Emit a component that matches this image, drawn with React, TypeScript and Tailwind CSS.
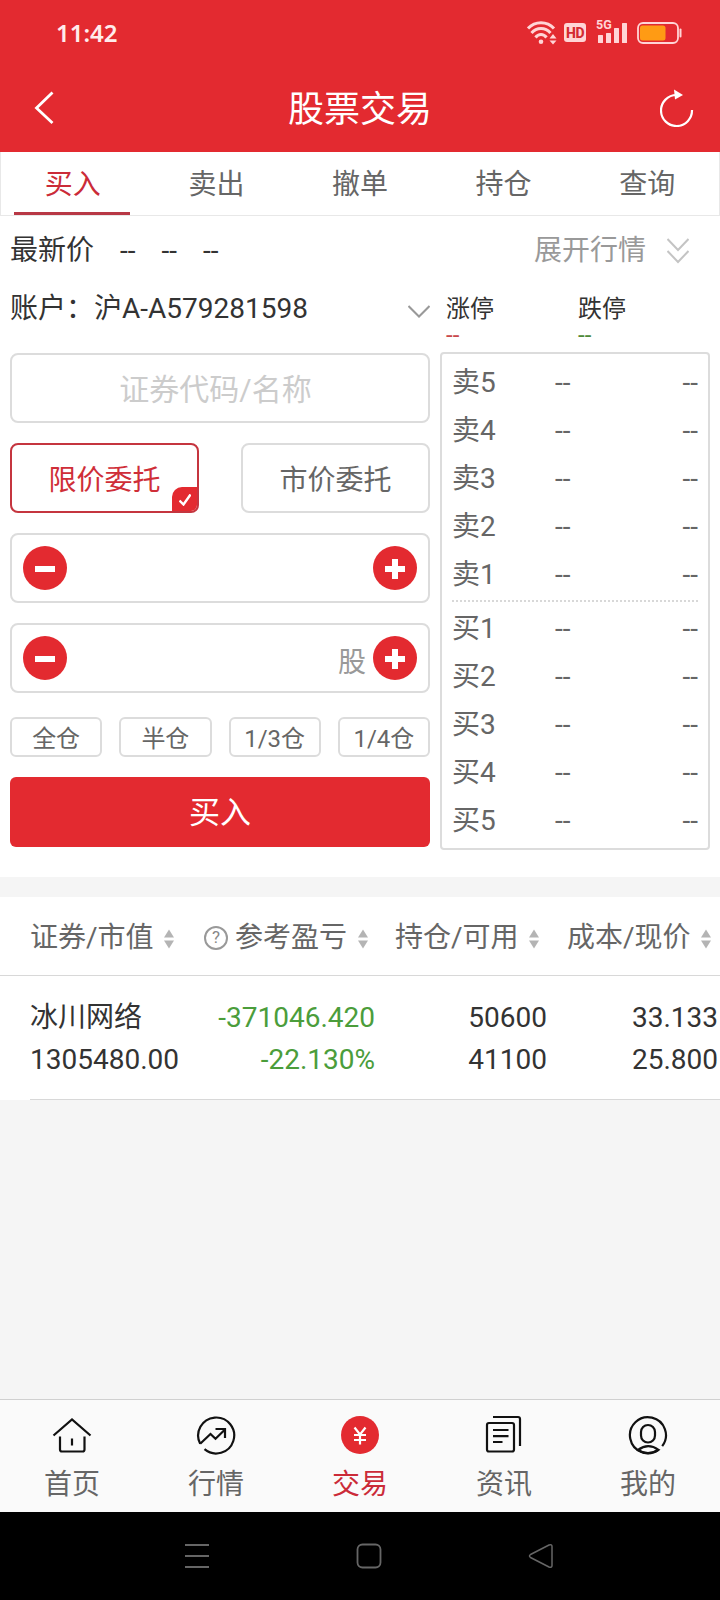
import React, { useState } from 'react';
import clsx from 'clsx';

const tabs = ['买入', '卖出', '撤单', '持仓', '查询'];
const sells = ['卖5', '卖4', '卖3', '卖2', '卖1'];
const buys = ['买1', '买2', '买3', '买4', '买5'];
const portions = ['全仓', '半仓', '1/3仓', '1/4仓'];

const StatusBar = () => (
  <div className="flex h-16 items-center justify-between pl-[56px] pr-[38px] pt-px">
    <span className="font-['Noto_Sans'] text-[24px] font-semibold text-[#ffecec]">11:42</span>
    <div className="flex items-center text-[#ffd5d6]">
      <svg width="30" height="24" viewBox="0 0 30 24" fill="none" stroke="currentColor" strokeWidth="3">
        <path d="M1 7.500C8 -0.200 20 -0.200 27 7.500" />
        <path d="M4.500 12C9.700 6 18.300 6 23.500 12" />
        <path d="M8.500 16.500C11.500 12.500 16.500 12.500 19.500 16.500" />
        <circle cx="14" cy="20.800" r="2.300" fill="currentColor" stroke="none" />
        <path d="M22.500 17.500l3.500-4.500 3.500 4.500zM22.500 19.500l3.500 4 3.500-4z" fill="currentColor" stroke="none" />
      </svg>
      <span className="ml-[7px] flex h-[19px] w-[22px] items-center justify-center rounded-[3px] bg-[#ffd5d6] font-['Roboto'] text-[14px] font-extrabold leading-none tracking-tight text-[#d42a31]">
        HD
      </span>
      <div className="relative ml-[10px] h-6 w-8">
        <span className="absolute left-0 -top-[2px] font-['Roboto'] text-[12.5px] font-bold leading-none">5G</span>
        <svg width="32" height="24" viewBox="0 0 32 24" fill="currentColor">
          <rect x="2" y="14" width="5" height="8" rx="0.500" />
          <rect x="10" y="12" width="5" height="10" rx="0.500" />
          <rect x="18" y="7" width="5" height="15" rx="0.500" />
          <rect x="26" y="2" width="5" height="20" rx="0.500" />
        </svg>
      </div>
      <svg className="ml-[9px]" width="45" height="22" viewBox="0 0 45 22" fill="none">
        <rect x="1" y="1" width="40" height="20" rx="5" stroke="currentColor" strokeWidth="1.800" />
        <rect x="3" y="3.500" width="25.500" height="15" rx="2.500" fill="#ff9b14" />
        <path d="M43.500 7.500v7" stroke="currentColor" strokeWidth="2" strokeLinecap="round" />
      </svg>
    </div>
  </div>
);

const StepButton: React.FC<{ plus?: boolean }> = ({ plus }) => (
  <button className="flex h-11 w-11 items-center justify-center rounded-full bg-[#e32a30]">
    <svg width="20" height="20" viewBox="0 0 20 20" className="mt-[2px]">
      <path d={plus ? 'M0 10h20M10 0v20' : 'M0 10h20'} stroke="#fff" strokeWidth="6" />
    </svg>
  </button>
);

const SortIcon = () => (
  <svg width="10" height="20" viewBox="0 0 10 20" fill="#b4b4b4" className="mt-[3px] shrink-0">
    <path d="M5 0.500l5 8H0zM5 19.500l5-8H0z" />
  </svg>
);

const QuoteRow: React.FC<{ label: string }> = ({ label }) => (
  <div className="flex h-12 items-center pt-px">
    <span className="w-[103px]">{label}</span>
    <span className="flex-1">--</span>
    <span>--</span>
  </div>
);

const navItems = [
  {
    label: '首页',
    icon: (
      <>
        <path d="M1.500 20.500L20 4.500l18.500 16" />
        <path d="M8 21.500v13q0 2 2 2h20.500q2 0 2-2v-13M20 23.500v7" />
      </>
    ),
  },
  {
    label: '行情',
    icon: (
      <>
        <path d="M4.200 28.800A18 18 0 1 1 8.500 34.200" />
        <path d="M4.200 28.800L14.500 19l5 4.800L29 14.500M19.500 14h9.500v9" />
      </>
    ),
  },
  {
    label: '交易',
    icon: (
      <>
        <circle cx="20" cy="20" r="19" fill="#e32a30" stroke="none" />
        <path d="M14.500 12.500l5.500 7 5.500-7M14 20h12M14 25h12M20 19v10.500" stroke="#fff" />
      </>
    ),
  },
  {
    label: '资讯',
    icon: (
      <>
        <rect x="3" y="8" width="27" height="28.500" rx="2" />
        <path d="M9 2h25q2 0 2 2v27M9 15h15.500M9 21.200h15.500M9 27h9.500" />
      </>
    ),
  },
  {
    label: '我的',
    icon: (
      <>
        <path d="M34.200 31.200A18 18 0 1 0 30.500 34.800" />
        <rect x="13" y="10" width="14" height="17.500" rx="7" />
        <path d="M10 35Q20 27.500 30.500 34.800Q20 41.500 10 35z" />
      </>
    ),
  },
];

const App: React.FC = () => {
  const [tab, setTab] = useState('买入');
  const [limit, setLimit] = useState(true);

  return (
    <div className="flex h-[1600px] w-[720px] flex-col overflow-hidden bg-[#f5f5f5] font-['Roboto','Noto_Sans_CJK_SC',sans-serif] text-[28px] leading-none text-[#333]">
      <header className="h-[152px] bg-[#e32a30] text-white">
        <StatusBar />
        <div className="flex h-[88px] items-center justify-between pl-[34px] pr-[26px]">
          <svg width="26" height="34" viewBox="0 0 26 34" fill="none" stroke="currentColor" strokeWidth="2.800">
            <path d="M18.500 1.500L2.500 17l16 15" />
          </svg>
          <h1 className="mt-1 text-[36px]">股票交易</h1>
          <svg width="34" height="38" viewBox="0 0 34 38" fill="none" stroke="currentColor" strokeWidth="2.200">
            <path d="M16.500 6A15.500 15.500 0 1 0 32 21" />
            <path d="M14 0.500l9 5.500-8 4.500z" fill="currentColor" stroke="none" />
          </svg>
        </div>
      </header>

      <nav className="flex h-16 border border-t-0 border-[#e8e8e8] bg-white">
        {tabs.map((t) => (
          <button
            key={t}
            onClick={() => setTab(t)}
            className={clsx('flex flex-1 flex-col items-center justify-end', tab === t ? 'text-[#cb2b38]' : 'text-[#666]')}
          >
            <span className="mb-[13px]">{t}</span>
            <span className={clsx('mr-[2px] h-[3px] w-[116px]', tab === t && 'bg-[#b83845]')} />
          </button>
        ))}
      </nav>

      <section className="h-[661px] bg-white px-[10px]">
        <div className="flex h-[68px] items-center pt-px">
          <span className="mt-px">最新价</span>
          <span className="ml-[26px]">--</span>
          <span className="ml-[26px]">--</span>
          <span className="ml-[26px]">--</span>
          <span className="ml-auto mt-px text-[#999]">展开行情</span>
          <svg className="ml-[21px] mr-[21px]" width="22" height="26" viewBox="0 0 22 26" fill="none" stroke="#c4c4c4" strokeWidth="2">
            <path d="M0.500 1L11 12 21.500 1M0.500 13L11 24 21.500 13" />
          </svg>
        </div>

        <div className="flex gap-[10px]">
          <div className="w-[420px]">
            <div className="flex h-12 items-center pt-[2px]">
              <span className="w-[84px]">账户：</span>
              <span>沪A-A579281598</span>
              <svg className="ml-auto mt-1" width="22" height="13" viewBox="0 0 22 13" fill="none" stroke="#999" strokeWidth="2">
                <path d="M0.500 1L11 11.500 21.500 1" />
              </svg>
            </div>
            <input
              placeholder="证券代码/名称"
              className="mt-[21px] block h-[70px] w-full rounded-lg border-2 border-[#dcdcdc] pr-[9px] pt-[2px] text-center text-[30px] placeholder:text-[#ccc]"
            />
            <div className="mt-5 flex justify-between">
              <button
                onClick={() => setLimit(true)}
                className="relative h-[70px] w-[189px] overflow-hidden rounded-lg border-2 border-[#c5353f] pt-[5px] text-[#cf2e38]"
              >
                限价委托
                <span className="absolute -bottom-[1px] -right-[1px] flex h-[25px] w-[26px] items-center justify-center rounded-tl-[10px] bg-[#e32a30]">
                  <svg width="12" height="12" viewBox="0 0 12 12" fill="none" stroke="#fff" strokeWidth="2.400">
                    <path d="M0.500 6.500l4 4 7-10" />
                  </svg>
                </span>
              </button>
              <button
                onClick={() => setLimit(!limit)}
                className="h-[70px] w-[189px] rounded-lg border-2 border-[#dcdcdc] pt-[5px] text-[#666]"
              >
                市价委托
              </button>
            </div>
            <div className="mt-5 flex h-[70px] items-center justify-between rounded-lg border-2 border-[#dcdcdc] px-[11px]">
              <StepButton />
              <StepButton plus />
            </div>
            <div className="mt-5 flex h-[70px] items-center rounded-lg border-2 border-[#dcdcdc] px-[11px]">
              <StepButton />
              <span className="ml-auto mr-[7px] mt-[10px] text-[#999]">股</span>
              <StepButton plus />
            </div>
            <div className="mt-6 grid grid-cols-4 gap-[17px] text-[24px] text-[#666]">
              {portions.map((p) => (
                <button key={p} className="h-10 whitespace-nowrap rounded-md border-2 border-[#dcdcdc] pt-1">
                  {p}
                </button>
              ))}
            </div>
            <button className="mt-5 h-[70px] w-full rounded-md bg-[#e32a30] text-[31px] text-white">买入</button>
          </div>

          <div className="w-[270px]">
            <div className="flex h-[68px] pl-[6px] pt-[13px] text-[24px]">
              <div className="w-[132px]">
                <div>涨停</div>
                <div className="mt-[2px] text-[#c9494c]">--</div>
              </div>
              <div>
                <div>跌停</div>
                <div className="mt-[2px] text-[#4f8a3a]">--</div>
              </div>
            </div>
            <div className="h-[498px] rounded border-2 border-[#dcdcdc] px-[10px] pt-1 text-[#666]">
              {sells.map((s) => (
                <QuoteRow key={s} label={s} />
              ))}
              <div className="my-[2px] border-t-2 border-dotted border-[#d8d8d8]" />
              {buys.map((b) => (
                <QuoteRow key={b} label={b} />
              ))}
            </div>
          </div>
        </div>
      </section>

      <section className="mt-5 w-[720px] overflow-hidden bg-white">
        <div className="flex h-[79px] items-center border-b border-[#d8d8d8] pl-[30px] pt-[3px] text-[#666]">
          <div className="flex w-[174px] items-center gap-[10px] whitespace-nowrap">
            证券/市值
            <SortIcon />
          </div>
          <div className="flex w-[191px] items-center whitespace-nowrap">
            <span className="mr-[7px] flex h-6 w-6 shrink-0 items-center justify-center rounded-full border-2 border-[#999] text-[17px] text-[#888]">
              ?
            </span>
            <span className="mr-[11px]">参考盈亏</span>
            <SortIcon />
          </div>
          <div className="flex w-[172px] items-center gap-[10px] whitespace-nowrap">
            持仓/可用
            <SortIcon />
          </div>
          <div className="flex items-center gap-[10px] whitespace-nowrap">
            成本/现价
            <SortIcon />
          </div>
        </div>
        <div className="ml-[30px] flex h-[124px] border-b border-[#d8d8d8] pt-[21px] leading-[42px]">
          <div className="w-[174px]">
            <div>冰川网络</div>
            <div>1305480.00</div>
          </div>
          <div className="w-[171px] text-right text-[#4b9d3b]">
            <div>-371046.420</div>
            <div>-22.130%</div>
          </div>
          <div className="w-[172px] text-right">
            <div>50600</div>
            <div>41100</div>
          </div>
          <div className="w-[171px] text-right">
            <div>33.133</div>
            <div>25.800</div>
          </div>
        </div>
      </section>

      <footer className="mt-auto">
        <div className="flex h-[113px] border-t border-[#d0d0d0] bg-[#fafafa]">
          {navItems.map((item) => (
            <button
              key={item.label}
              className={clsx('flex flex-1 flex-col items-center pt-[15px]', item.label === '交易' ? 'text-[#cb2b38]' : 'text-[#666]')}
            >
              <svg width="40" height="40" viewBox="0 0 40 40" fill="none" stroke="#111" strokeWidth="2.200">
                {item.icon}
              </svg>
              <span className="mt-4">{item.label}</span>
            </button>
          ))}
        </div>
        <div className="flex h-22 items-center bg-black pl-[184px] text-[#666]">
          <svg width="26" height="26" viewBox="0 0 26 26" fill="none" stroke="currentColor" strokeWidth="2">
            <path d="M1 2h24M1 13h24M1 24h24" />
          </svg>
          <svg className="ml-[146px]" width="26" height="26" viewBox="0 0 26 26" fill="none" stroke="currentColor" strokeWidth="1.800">
            <rect x="1.500" y="1.500" width="23" height="23" rx="5" />
          </svg>
          <svg className="ml-[146px]" width="26" height="26" viewBox="0 0 26 26" fill="none" stroke="currentColor" strokeWidth="1.500" strokeLinejoin="round">
            <path d="M2.500 11.500L21 2q3-1 3 1.500v19q0 2.500-3 1.500L2.500 14.500q-2-1.500 0-3z" />
          </svg>
        </div>
      </footer>
    </div>
  );
};

export default App;
